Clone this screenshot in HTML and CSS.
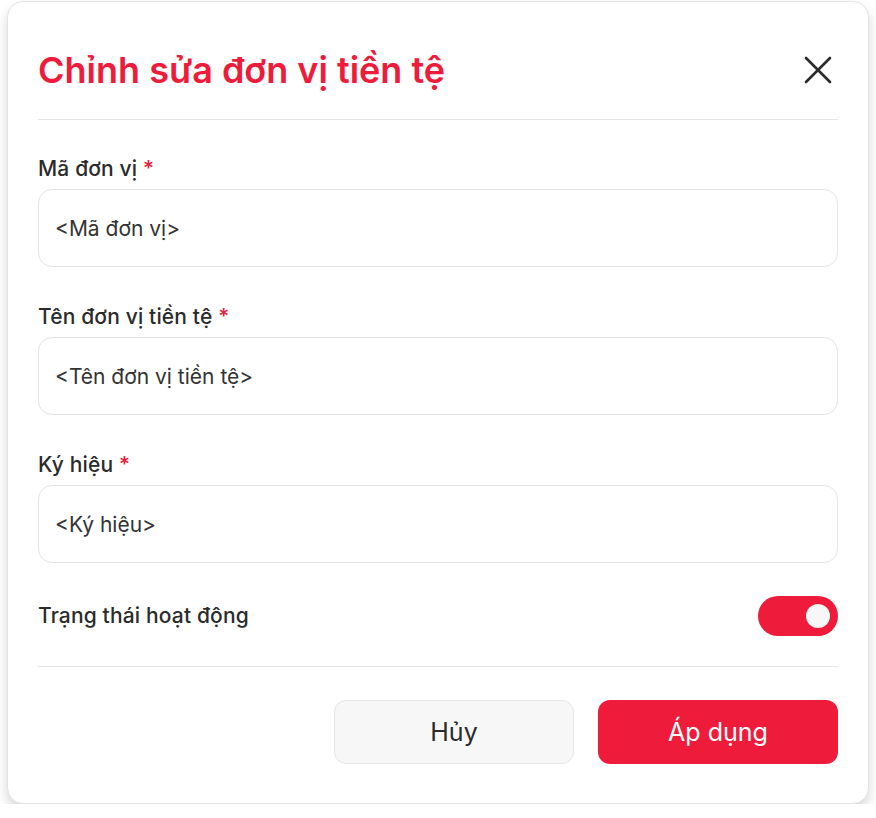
FILE: index.html
```html
<!DOCTYPE html>
<html lang="vi">
<head>
<meta charset="utf-8">
<title>Chỉnh sửa đơn vị tiền tệ</title>
<link rel="stylesheet" href="styles.css">
</head>
<body>
<div class="page">
  <div class="dialog">
    <div class="header">
      <h1 class="title">Chỉnh sửa đơn vị tiền tệ</h1>
      <button class="close" aria-label="Đóng">
        <svg width="28" height="28" viewBox="0 0 28 28"><path d="M2 2 L26 26 M26 2 L2 26" stroke="#2b2b2b" stroke-width="2.6" stroke-linecap="round" fill="none"/></svg>
      </button>
    </div>
    <div class="body">
      <div class="field">
        <label class="label">Mã đơn vị <span class="req">*</span></label>
        <div class="input">&lt;Mã đơn vị&gt;</div>
      </div>
      <div class="field">
        <label class="label">Tên đơn vị tiền tệ <span class="req">*</span></label>
        <div class="input">&lt;Tên đơn vị tiền tệ&gt;</div>
      </div>
      <div class="field">
        <label class="label">Ký hiệu <span class="req">*</span></label>
        <div class="input">&lt;Ký hiệu&gt;</div>
      </div>
      <div class="toggle-row">
        <span class="label">Trạng thái hoạt động</span>
        <span class="switch"><span class="knob"></span></span>
      </div>
    </div>
    <div class="footer">
      <button class="btn btn-cancel">Hủy</button>
      <button class="btn btn-apply">Áp dụng</button>
    </div>
  </div>
</div>
</body>
</html>
```
FILE: styles.css
```css
* { box-sizing: border-box; }
html, body { margin: 0; padding: 0; background: #ffffff; }
body { font-family: Inter, "Noto Sans", "Liberation Sans", sans-serif; color: #2b2b2b; }
.page { padding: 1px 7px 0 7px; }
.dialog {
  width: 862px;
  height: 803px;
  background: #fff;
  border: 1px solid #e4e4e4;
  border-radius: 16px;
  box-shadow: 0 6px 12px rgba(0,0,0,0.16);
  padding: 0 30px;
}
.header {
  display: flex;
  align-items: center;
  justify-content: space-between;
  padding-top: 47px;
  padding-bottom: 28px;
  border-bottom: 1.5px solid #e6e6e6;
}
.title {
  margin: 0;
  font-size: 36px;
  line-height: 42px;
  font-weight: 600;
  color: #ee1b3a;
}
.close {
  border: 0; background: none; padding: 0; margin-right: 6px;
  width: 28px; height: 28px; display: flex;
}
.body { padding-top: 37px; }
.field { display: flex; flex-direction: column; gap: 8px; margin-bottom: 38px; }
.label { font-size: 21px; line-height: 24px; font-weight: 500; color: #2b2b2b; letter-spacing: 0.15px; }
.req { color: #ee1b3a; }
.input {
  height: 78px;
  border: 1.5px solid #e6e6e6;
  border-radius: 14px;
  padding: 0 16px;
  display: flex; align-items: center;
  font-size: 21px; color: #333;
}
.toggle-row {
  display: flex; align-items: center; justify-content: space-between;
  margin-top: -5px;
  padding-bottom: 30px;
  border-bottom: 1.5px solid #e6e6e6;
}
.switch {
  width: 80px; height: 40px; border-radius: 20px; background: #ee1b3a;
  display: flex; align-items: center; justify-content: flex-end; padding-right: 8px;
}
.knob { width: 24px; height: 24px; border-radius: 50%; background: #f7f7f7; }
.footer {
  display: flex; justify-content: flex-end; gap: 24px;
  padding-top: 33px;
}
.btn {
  width: 240px; height: 64px; border-radius: 12px;
  font-family: inherit; font-size: 25px; font-weight: 400;
}
.btn-cancel { background: #f7f7f7; border: 1.5px solid #e6e6e6; color: #2b2b2b; }
.btn-apply { background: #ee1b3a; border: 0; color: #fff; }
```
